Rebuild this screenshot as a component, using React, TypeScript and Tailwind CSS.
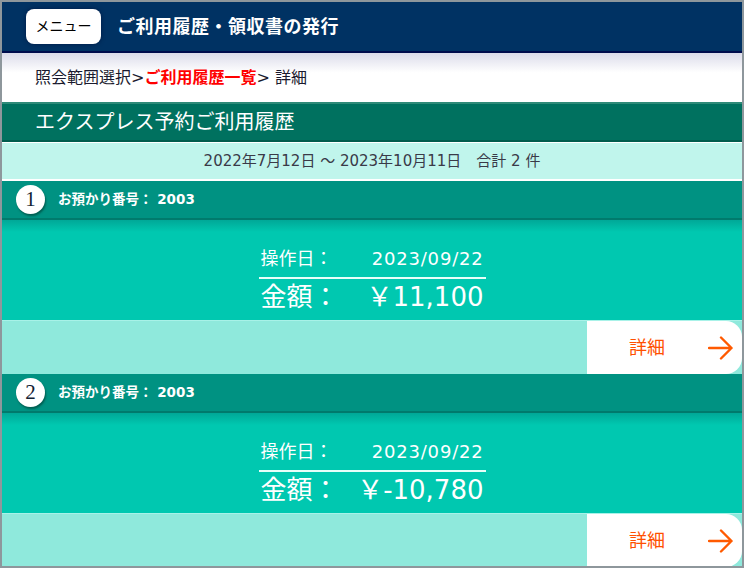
import React from "react";

const jp = { fontFamily: '"DejaVu Sans", "Noto Sans CJK JP", "Noto Sans", sans-serif' };

type Item = { no: number; ref: string; date: string; amount: string };

const items: Item[] = [
  { no: 1, ref: "2003", date: "2023/09/22", amount: "￥11,100" },
  { no: 2, ref: "2003", date: "2023/09/22", amount: "￥-10,780" },
];

function Arrow() {
  return (
    <svg width="26" height="24" viewBox="0 0 26 24" fill="none">
      <path d="M1 12h22.5M13 1.5L23.5 12 13 22.5" stroke="#ff5a00" strokeWidth="2.4" strokeLinecap="round" strokeLinejoin="round" />
    </svg>
  );
}

function HistoryCard({ item }: { item: Item }) {
  return (
    <div className="flex flex-col">
      {/* Card header */}
      <div className="h-[39px] bg-[#009282] flex items-center pl-[14px] gap-[13px] border-b-[2px] border-[#007a6c]">
        <div
          className="w-[29px] h-[29px] rounded-full bg-white flex items-center justify-center text-[21px] leading-none text-[#123] shadow-[1px_2px_2px_rgba(0,60,50,0.6)]"
          style={{ fontFamily: '"Liberation Serif", serif' }}
        >
          {item.no}
        </div>
        <span className="text-white text-[13.5px] font-bold">お預かり番号： {item.ref}</span>
      </div>

      {/* Card body */}
      <div className="h-[100px] bg-gradient-to-b from-[#00a897] via-[#00c8b0] via-[12%] to-[#00c8b0] flex justify-center pt-[27px]">
        <div className="w-[227px] flex flex-col text-white">
          <div className="flex justify-between items-center h-[24px] px-[2px] text-[18px] leading-none">
            <span>操作日：</span>
            <span className="tracking-[0.8px]">{item.date}</span>
          </div>
          <div className="h-[2px] bg-[#e6fff9] mt-[6px]" />
          <div className="flex justify-between items-center h-[36px] px-[2px] text-[26px] leading-none">
            <span>金額：</span>
            <span>{item.amount}</span>
          </div>
        </div>
      </div>

      {/* Footer row */}
      <div className="h-[54px] bg-[#8fe9dc] border-t border-[#a8f2e8] flex justify-end">
        <button className="w-[155px] h-full bg-white rounded-r-[16px] flex items-center pl-[42px] pr-[8px] justify-between">
          <span className="text-[18px] text-[#ff5000]">詳細</span>
          <Arrow />
        </button>
      </div>
    </div>
  );
}

export default function App() {
  return (
    <div className="w-[744px] h-[568px] bg-[#8e979c] p-[2px]" style={jp}>
      <div className="h-full bg-white flex flex-col overflow-hidden">
        {/* Header */}
        <header className="h-[51px] bg-[#003263] border-b-[2px] border-[#000d4d] flex items-center pl-[24px] gap-[16px] shrink-0">
          <div className="w-[75px] h-[35px] bg-white rounded-[8px] flex items-center justify-center text-[14px] text-black shadow-[0_0_4px_rgba(0,0,40,0.5)]">
            メニュー
          </div>
          <h1 className="text-white text-[18px] font-bold tracking-[0.5px]">ご利用履歴・領収書の発行</h1>
        </header>

        {/* Breadcrumb */}
        <nav className="h-[49px] bg-gradient-to-b from-[#dcdcea] to-white to-[40%] flex items-center pl-[33px] text-[16px] text-[#1a1a2e] shrink-0">
          <span>照会範囲選択&gt;</span>
          <span className="text-[#ff0000] font-bold">ご利用履歴一覧</span>
          <span>&gt; 詳細</span>
        </nav>

        {/* Title */}
        <div className="h-[40px] bg-[#00715f] border-t-[2px] border-[#2e8a78] border-b-[2px] border-b-[#005c4d] flex items-center pl-[33px] text-white text-[20px] shrink-0">
          エクスプレス予約ご利用履歴
        </div>

        {/* Date range */}
        <div className="h-[39px] bg-[#c0f5ec] border-t border-b-[2px] border-white flex items-center justify-center text-[15px] text-[#3a3a48] shrink-0">
          2022年7月12日 ～ 2023年10月11日　合計 2 件
        </div>

        <div className="flex flex-col">
          {items.map((it) => (
            <HistoryCard key={it.no} item={it} />
          ))}
        </div>
      </div>
    </div>
  );
}
